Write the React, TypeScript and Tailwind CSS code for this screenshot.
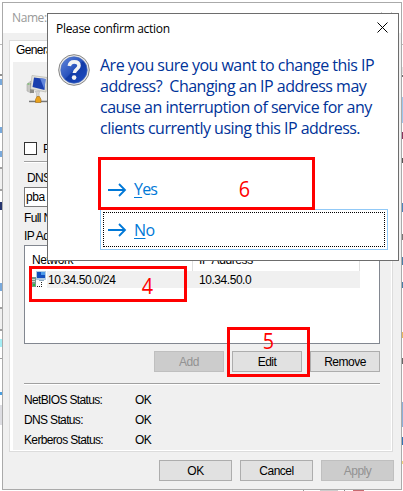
import React from "react";

const ui = "font-['Liberation_Sans',Arial,sans-serif] text-[12px] leading-[14px] tracking-[-0.65px] text-black";
const segoe = "font-['Open_Sans','Noto_Sans',sans-serif]";

function Button({ children, className = "", disabled = false }: { children: React.ReactNode; className?: string; disabled?: boolean }) {
  return (
    <button
      className={`flex items-center justify-center border pt-px tracking-[-0.5px] ${disabled ? "border-[#bfbfbf] bg-[#cccccc] text-[#929292]" : "border-[#adadad] bg-[#e1e1e1] text-black"} ${className}`}
    >
      {children}
    </button>
  );
}

function Status({ name }: { name: string }) {
  return (
    <div className="flex h-5 items-center">
      <span className="w-[111px]">{name}</span>
      <span>OK</span>
    </div>
  );
}

function ServerIcon() {
  return (
    <svg width="30" height="30" viewBox="0 0 30 30" className="shrink-0">
      <path d="M1 10l4-3v12l-4-2z" fill="#c7c7c2" stroke="#aaa" strokeWidth=".6" />
      <path d="M4 9h4v10H4z" fill="#8d8d88" />
      <path d="M1.5 10h2" stroke="#55b947" />
      <path d="M6 1.5l15 2-1 14.5L4.500 15z" fill="#e4e3dd" stroke="#b5b4ad" strokeWidth=".7" />
      <path d="M8 3.500l11.500 1.500-1 11L6.500 13z" fill="#1b3fae" />
      <path d="M14 4.300l5.500.7-1 10.500z" fill="#6387dc" />
      <path d="M9 17.500h5l-1 1.500v4h-2.500v-4z" fill="#d6d6d2" stroke="#aaa" strokeWidth=".5" />
      <path d="M3 27.500h20" stroke="#777" strokeWidth="1.4" />
      <path d="M3 26.500h20" stroke="#ccc" />
      <path d="M9.500 28.500v-3l1.500-3h2.500l1.500 3v3z" fill="#eaa21b" stroke="#a36b13" strokeWidth=".6" />
    </svg>
  );
}

function NetworkIcon() {
  return (
    <svg width="15" height="17" viewBox="0 0 15 17" shapeRendering="crispEdges" className="shrink-0">
      <path d="M0 6h4v10H0z" fill="#78988d" />
      <path d="M0 8.500h3M0 10.500h3" stroke="#c9ddd1" />
      <path d="M1 13h2v2H1z" fill="#28bd41" />
      <path d="M4 0h10v9H4z" fill="#b3cbe2" />
      <path d="M5 1h8v6H5z" fill="#1450bd" />
      <path d="M9 1h4v3H9z" fill="#4d9bea" />
      <path d="M7 9.500h5" stroke="#8da7bd" />
      <path d="M9.500 11v5M5 15.500h5" stroke="#222" strokeDasharray="1 1" />
    </svg>
  );
}

function QuestionIcon() {
  return (
    <svg width="32" height="32" viewBox="0 0 32 32" className="shrink-0">
      <defs>
        <linearGradient id="blueFill" x1="0" y1="0" x2="1" y2="1">
          <stop offset="0" stopColor="#6287dc" />
          <stop offset=".48" stopColor="#2953bd" />
          <stop offset=".52" stopColor="#123ba6" />
          <stop offset="1" stopColor="#1d4cc4" />
        </linearGradient>
      </defs>
      <circle cx="16" cy="16" r="15.3" fill="#e9e9e9" stroke="#858585" />
      <circle cx="16" cy="16" r="13.2" fill="url(#blueFill)" stroke="#456abc" strokeWidth=".7" />
      <path d="M11.300 12c.4-2.900 2.200-4.100 4.900-4.100 2.900 0 4.800 1.400 4.800 3.800 0 3.700-4.700 3.600-4.700 7.300" fill="none" stroke="#f4f4f4" strokeWidth="3.600" />
      <circle cx="16.100" cy="23.600" r="2.300" fill="#f4f4f4" />
    </svg>
  );
}

function Arrow() {
  return (
    <svg width="19" height="14" viewBox="0 0 19 14" fill="none" stroke="#0078d7" strokeWidth="1.8">
      <path d="M0 7h17M11 1l6 6-6 6" />
    </svg>
  );
}

function Close({ className }: { className: string }) {
  return (
    <svg width="11" height="11" viewBox="0 0 11 11" className={className} stroke="currentColor">
      <path d="M.5.5l10 10m0-10l-10 10" />
    </svg>
  );
}

function LeftEdge() {
  return (
    <div className="flex w-[2px] shrink-0 flex-col">
      <i className="mt-[42px] h-px bg-[#b8b8b8]" />
      <i className="mt-[29px] h-[2px] bg-[#909090]" />
      <i className="mt-[3px] h-[6px] bg-[#78a9dc]" />
      <i className="mt-[42px] h-[6px] bg-[#78a9dc]" />
      <i className="mt-[18px] h-[6px] bg-[#78a9dc]" />
      <i className="mt-[10px] h-[2px] bg-[#a0a0a0]" />
      <i className="h-[20px] bg-[#f0f0f0]" />
      <i className="h-[2px] bg-[#a0a0a0]" />
      <i className="mt-[11px] h-[8px] bg-[#26356e]" />
      <i className="mt-[73px] h-[8px] bg-[#78a9dc]" />
      <i className="mt-[16px] h-[2px] bg-[#a0a0a0]" />
      <i className="h-[20px] bg-[#f0f0f0]" />
      <i className="h-[2px] bg-[#a0a0a0]" />
      <i className="mt-[8px] h-[8px] bg-[#a4eef5]" />
      <i className="mt-[11px] h-px bg-[#a0a0a0]" />
      <i className="mt-[33px] h-[3px] bg-[#4a9fe0]" />
      <i className="mt-[10px] h-[20px] bg-[#dddde2]" />
    </div>
  );
}

function RightEdge() {
  return (
    <div className="flex w-px shrink-0 flex-col">
      <i className="mt-[42px] h-px bg-[#b8b8b8]" />
      <i className="mt-[22px] h-[7px] bg-[#e4e4e4]" />
      <i className="mt-px h-[2px] bg-[#707070]" />
      <i className="mt-[20px] h-[26px] bg-[#9ec7ed]" />
      <i className="mt-[9px] h-[7px] bg-[#8d355e]" />
      <i className="mt-[19px] h-[5px] bg-[#555555]" />
      <i className="mt-[40px] h-[9px] bg-[#4b86bd]" />
      <i className="mt-[22px] h-[6px] bg-[#777777]" />
      <i className="mt-[17px] h-[8px] bg-[#487fa8]" />
      <i className="mt-[17px] h-[6px] bg-[#487fa8]" />
      <i className="mt-[44px] h-[6px] bg-[#eab75d]" />
      <i className="mt-[20px] h-[6px] bg-[#666666]" />
      <i className="mt-[38px] h-[25px] bg-[#8bafd8]" />
      <i className="mt-[10px] h-[8px] bg-[#3275b5]" />
      <i className="mt-[16px] h-[3px] bg-[#f0d67c]" />
    </div>
  );
}

function PropertiesWindow() {
  return (
    <div className="flex h-[488px] w-[400px] shrink-0 flex-col border border-[#aaaaaa] bg-[#f0f0f0]">
      <div className={`${segoe} flex h-[30px] shrink-0 justify-between bg-white pl-[9px] pr-[9px] pt-[7px] text-[12px] leading-[16px] tracking-[-0.4px] text-[#999999]`}>
        <span>Name:</span>
        <Close className="mt-[2px] text-[#999999]" />
      </div>
      <div className="ml-[6px] mt-[7px] flex h-[19px] w-[60px] shrink-0 items-center border border-b-0 border-[#dcdcdc] bg-white pl-[6px]">General</div>
      <div className="ml-[6px] flex h-[393px] w-[384px] shrink-0 flex-col border border-t-0 border-[#dcdcdc] bg-white p-[3px] pr-px pb-[2px]">
        <div className="flex flex-1 flex-col bg-[#f0f0f0] pl-[11px]">
          <div className="flex h-[80px] shrink-0 pl-[2px] pt-[12px]"><ServerIcon /></div>
          <div className="flex h-[19px] items-start">
            <span className="mr-[6px] size-[13px] border border-[#333333] bg-white" />PTR
          </div>
          <div className="h-[2px] w-[356px] border-b border-t border-b-white border-t-[#a0a0a0]" />
          <div className="flex h-[24px] items-end pb-[2px] pl-[3px]">DNS name</div>
          <div className="flex h-[20px] w-[356px] items-center border border-[#7a7a7a] bg-white pl-px tracking-[-0.4px]">pba</div>
          <div className="flex h-[22px] items-center">Full Name</div>
          <div className="h-[16px]">IP Addresses</div>
          <div className="h-[99px] w-[356px] shrink-0 border border-[#828790] bg-white">
            <div className="flex h-[25px] w-[335px] items-center border-r border-[#e0e0e0] pl-[7px] tracking-[-0.4px]">
              <span className="w-[160px] pt-[3px]">Network</span>
              <span className="flex h-full flex-1 items-center border-l border-[#e0e0e0] pl-[6px] pt-[3px]">IP Address</span>
            </div>
            <div className="flex h-[17px] w-[335px] items-center pl-[7px] tracking-[-0.45px]">
              <NetworkIcon />
              <div className="flex h-[17px] flex-1 items-center bg-[#f0f0f0] pl-px">
                <span className="w-[151px]">10.34.50.0/24</span><span>10.34.50.0</span>
              </div>
            </div>
          </div>
          <div className="mt-[7px] flex w-[356px] justify-end gap-[8px]">
            <Button className="h-[21px] w-[70px]" disabled>Add</Button>
            <Button className="h-[21px] w-[70px]">Edit</Button>
            <Button className="h-[21px] w-[70px]">Remove</Button>
          </div>
          <div className="mb-[5px] mt-[11px] h-[2px] w-[356px] border-b border-t border-b-white border-t-[#a0a0a0]" />
          <Status name="NetBIOS Status:" />
          <Status name="DNS Status:" />
          <Status name="Kerberos Status:" />
        </div>
      </div>
      <div className="mt-[8px] flex justify-end gap-[8px] pr-[7px]">
        <Button className="h-[21px] w-[73px]">OK</Button>
        <Button className="h-[21px] w-[73px]">Cancel</Button>
        <Button className="h-[21px] w-[73px]" disabled>Apply</Button>
      </div>
    </div>
  );
}

function ConfirmDialog() {
  return (
    <div className={`${segoe} absolute left-[47px] top-[13px] h-[248px] w-[352px] border border-[#6d6d6d] bg-white`}>
      <div className="flex h-[30px] items-center justify-between pl-[8px] pr-[10px] text-[12px] tracking-[-0.3px] text-black">
        <span>Please confirm action</span>
        <Close className="mb-[3px] text-black" />
      </div>
      <div className="flex pl-[10px] pt-[10px]">
        <QuestionIcon />
        <div className="ml-[10px] mt-px whitespace-pre text-[16px] leading-[21px] tracking-[-0.51px] text-[#003399]">
          <p>Are you sure you want to change this IP</p>
          <p>address?  Changing an IP address may</p>
          <p>cause an interruption of service for any</p>
          <p>clients currently using this IP address.</p>
        </div>
      </div>
      <div className="ml-[52px] mt-[22px] flex h-[41px] items-center gap-[7px] pl-[8px] pt-[16px] text-[16px] leading-[21px] tracking-[-0.8px] text-[#0078d7]">
        <Arrow /><span><u className="underline-offset-2">Y</u>es</span>
      </div>
      <div className="ml-[52px] mt-[7px] h-[41px] w-[288px] border border-[#91c9f7] p-[2px] text-[16px] leading-[21px] tracking-[-0.6px] text-[#0078d7]">
        <div className="flex h-full items-center gap-[7px] border border-dotted border-black pl-[4px] pt-px">
          <Arrow /><span><u className="underline-offset-2">N</u>o</span>
        </div>
      </div>
    </div>
  );
}

export default function App() {
  return (
    <div className={`${ui} relative h-[491px] w-[403px] overflow-hidden bg-white pt-[2px]`}>
      <div className="flex h-[488px]">
        <LeftEdge />
        <PropertiesWindow />
        <RightEdge />
      </div>
      <div className="flex h-px pl-[303px]">
        <i className="w-px bg-[#999999]" />
        <i className="ml-[16px] w-[18px] bg-[#cccccc]" />
        <i className="ml-[6px] w-px bg-[#888888]" />
        <i className="ml-[8px] w-[11px] bg-[#c76a70]" />
      </div>
      <ConfirmDialog />
      <div className={`${segoe} text-[22px] tracking-normal text-[#ff0000]`}>
        <div className="absolute left-[98px] top-[157px] flex h-[53px] w-[217px] items-center border-[3px] border-[#ff0000] pl-[137px] pt-[8px]"><span className="scale-x-90">6</span></div>
        <div className="absolute left-[29px] top-[266px] flex h-[36px] w-[158px] items-center border-[3px] border-[#ff0000] pl-[109px] pt-[2px]"><span className="scale-x-90">4</span></div>
        <div className="absolute left-[227px] top-[327px] flex h-[50px] w-[83px] items-start border-[3px] border-[#ff0000] pl-[32px] leading-[20px]"><span className="scale-x-90">5</span></div>
      </div>
    </div>
  );
}
